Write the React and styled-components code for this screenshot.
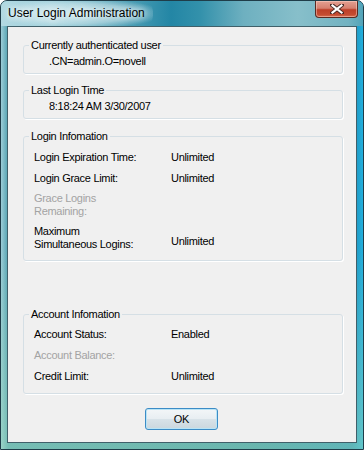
import React from 'react';
import styled, { createGlobalStyle } from 'styled-components';

const Global = createGlobalStyle`
  html, body { margin: 0; padding: 0; background: #ffffff; }
  body { font-family: "Liberation Sans", Arial, sans-serif; }
  * { box-sizing: border-box; }
`;

const Window = styled.div`
  width: 364px;
  height: 450px;
  display: flex;
  flex-direction: column;
  border: 1px solid #1f3d49;
  border-radius: 7px 7px 0 0;
  overflow: hidden;
  background:
    linear-gradient(180deg, rgba(255,255,255,0) 0%, rgba(255,255,255,0) 55%, rgba(150,215,185,0.55) 100%),
    linear-gradient(90deg, #9dcdd8 0%, #4f9fae 2%, #4598a6 35%, #348fa2 70%, #1f8db6 97%, #22b0de 100%);
`;

const TitleBar = styled.div`
  height: 25px;
  flex: none;
  display: flex;
  justify-content: space-between;
  align-items: flex-start;
  padding-left: 7px;
  background: linear-gradient(90deg, #b2d9e2 0%, #9fcfda 14%, #5ea9bc 30%, #2386a5 47%, #3391ab 55%, #6eb0c0 67%, #87bfca 82%, #72b2c1 96%, #52a4b9 100%);
`;

const Title = styled.div`
  font-size: 12px;
  line-height: 25px;
  color: #000;
  padding: 0 8px 0 1px;
  margin-left: -1px;
  border-radius: 10px;
  text-shadow: 0 0 6px rgba(255,255,255,0.9), 0 0 10px rgba(255,255,255,0.8);
  background: radial-gradient(ellipse 58% 60% at 50% 50%, rgba(225,242,246,0.75) 0%, rgba(225,242,246,0.45) 65%, rgba(225,242,246,0) 100%);
`;

const CloseButton = styled.div`
  width: 43px;
  height: 17px;
  margin-right: 5px;
  display: flex;
  align-items: center;
  justify-content: center;
  border: 1px solid #5a2a22;
  border-top: none;
  border-radius: 0 0 4px 4px;
  background: linear-gradient(180deg, #e4a092 0%, #d6806f 45%, #bd3f28 55%, #c44c32 85%, #d66e50 100%);
  box-shadow: inset 0 0 0 1px rgba(255, 220, 210, 0.45);
`;

const Client = styled.div`
  flex: 1;
  margin: 0 6px 6px 6px;
  border: 1px solid #40606a;
  background: #f0f0f0;
  padding: 12px 13px 0 15px;
  display: flex;
  flex-direction: column;
  font-size: 11px;
  letter-spacing: -0.3px;
  line-height: 13px;
  color: #000;
`;

const Group = styled.fieldset`
  margin: ${p => p.$mt || 0}px 0 0 0;
  padding: 0;
  min-width: 0;
  border: 1px solid #d5dfe5;
  border-radius: 3px;
  box-shadow: 1px 1px 0 #ffffff;
`;

const Legend = styled.legend`
  margin-left: 5px;
  padding: 0 2px;
  font-size: 11px;
  line-height: 13px;
`;

const SingleValue = styled.div`
  padding: 3px 0 5px 25px;
`;

const Rows = styled.div`
  padding: ${p => p.$pt}px 0 ${p => p.$pb}px 10px;
`;

const Row = styled.div`
  display: grid;
  grid-template-columns: 137px 1fr;
  margin-top: ${p => p.$mt || 0}px;
`;

const Label = styled.div`
  color: ${p => (p.$disabled ? '#a3a3a3' : '#000')};
`;

const Value = styled.div`
  align-self: ${p => (p.$bottom ? 'end' : 'start')};
  margin-bottom: ${p => (p.$bottom ? 3 : 0)}px;
`;

const ButtonRow = styled.div`
  display: flex;
  justify-content: center;
  padding-right: 3px;
  margin-top: 14px;
`;

const OkButton = styled.button`
  width: 73px;
  height: 22px;
  padding: 0;
  font-family: "Liberation Sans", Arial, sans-serif;
  font-size: 11px;
  letter-spacing: -0.3px;
  color: #000;
  border: 1px solid #3c8cc6;
  border-radius: 3px;
  background: linear-gradient(180deg, #f3f6f8 0%, #e8eef2 48%, #d8e2e8 52%, #cbd7de 100%);
  box-shadow: inset 0 0 0 1px #b9e4f6;
`;

function CloseIcon() {
  return (
    <svg width="14" height="10" viewBox="0 0 14 10">
      <path d="M2 1 L12 9 M12 1 L2 9" stroke="#4a2a25" strokeWidth="4" strokeLinecap="square" />
      <path d="M2.5 1.5 L11.5 8.5 M11.5 1.5 L2.5 8.5" stroke="#ffffff" strokeWidth="2.2" strokeLinecap="square" />
    </svg>
  );
}

export default function App() {
  return (
    <>
      <Global />
      <Window>
        <TitleBar>
          <Title>User Login Administration</Title>
          <CloseButton>
            <CloseIcon />
          </CloseButton>
        </TitleBar>
        <Client>
          <Group>
            <Legend>Currently authenticated user</Legend>
            <SingleValue>.CN=admin.O=novell</SingleValue>
          </Group>
          <Group $mt={10}>
            <Legend>Last Login Time</Legend>
            <SingleValue>8:18:24 AM 3/30/2007</SingleValue>
          </Group>
          <Group $mt={11}>
            <Legend>Login Infomation</Legend>
            <Rows $pt={8} $pb={9}>
              <Row>
                <Label>Login Expiration Time:</Label>
                <Value>Unlimited</Value>
              </Row>
              <Row $mt={8}>
                <Label>Login Grace Limit:</Label>
                <Value>Unlimited</Value>
              </Row>
              <Row $mt={7}>
                <Label $disabled>
                  Grace Logins
                  <br />
                  Remaining:
                </Label>
                <Value />
              </Row>
              <Row $mt={6.5}>
                <Label>
                  Maximum
                  <br />
                  Simultaneous Logins:
                </Label>
                <Value $bottom>Unlimited</Value>
              </Row>
            </Rows>
          </Group>
          <Group $mt={47}>
            <Legend>Account Infomation</Legend>
            <Rows $pt={7} $pb={10}>
              <Row>
                <Label>Account Status:</Label>
                <Value>Enabled</Value>
              </Row>
              <Row $mt={8.5}>
                <Label $disabled>Account Balance:</Label>
                <Value />
              </Row>
              <Row $mt={7.5}>
                <Label>Credit Limit:</Label>
                <Value>Unlimited</Value>
              </Row>
            </Rows>
          </Group>
          <ButtonRow>
            <OkButton>OK</OkButton>
          </ButtonRow>
        </Client>
      </Window>
    </>
  );
}
